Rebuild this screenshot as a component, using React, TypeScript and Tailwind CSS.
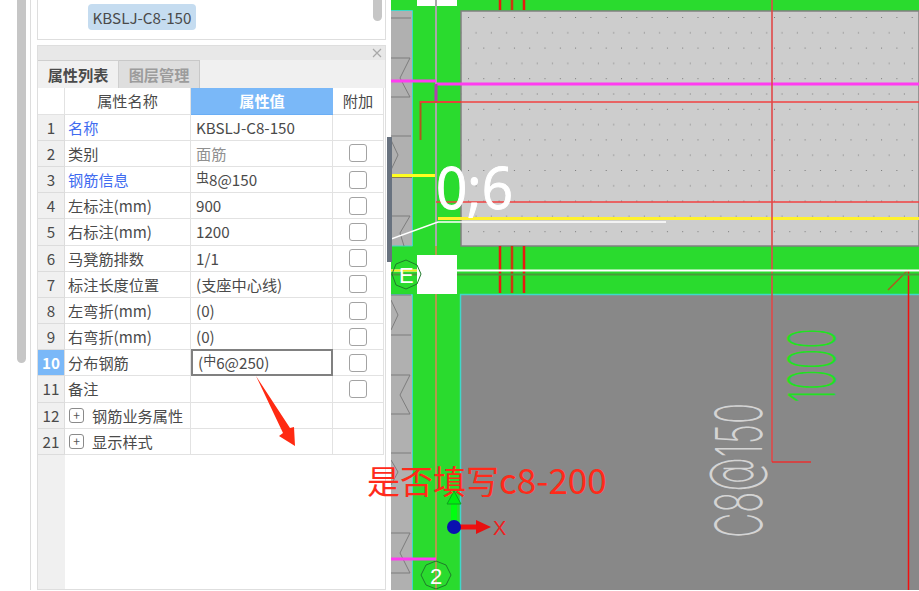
import React from "react";

const FONT = '"Noto Sans CJK SC", "Noto Sans", sans-serif';

type Row = { n: string; name: string; value?: React.ReactNode; blue?: boolean; gray?: boolean; check?: boolean; expand?: boolean; selected?: boolean };

const Rebar = ({ g }: { g: string }) => (
  <span className="text-[13px] relative -top-[3px] leading-none">{g}</span>
);

const rows: Row[] = [
  { n: "1", name: "名称", value: "KBSLJ-C8-150", blue: true },
  { n: "2", name: "类别", value: "面筋", gray: true, check: true },
  { n: "3", name: "钢筋信息", value: <><Rebar g="虫" />8@150</>, blue: true, check: true },
  { n: "4", name: "左标注(mm)", value: "900", check: true },
  { n: "5", name: "右标注(mm)", value: "1200", check: true },
  { n: "6", name: "马凳筋排数", value: "1/1", check: true },
  { n: "7", name: "标注长度位置", value: "(支座中心线)", check: true },
  { n: "8", name: "左弯折(mm)", value: "(0)", check: true },
  { n: "9", name: "右弯折(mm)", value: "(0)", check: true },
  { n: "10", name: "分布钢筋", value: <>(<Rebar g="中" />6@250)</>, check: true, selected: true },
  { n: "11", name: "备注", check: true },
  { n: "12", name: "钢筋业务属性", expand: true },
  { n: "21", name: "显示样式", expand: true },
];

const Checkbox = () => <div className="w-[18px] h-[18px] rounded-[3px] border border-[#a3a3a3] bg-white" />;

const PropertyRow = ({ r }: { r: Row }) => (
  <div className="grid grid-cols-[27px_126px_142px_51px] h-[26.2px] text-[15.2px] leading-none">
    <div className={`flex items-center justify-center border-r border-b border-[#dcdcdc] ${r.selected ? "bg-[#7ab8f8] text-white font-bold" : "bg-[#f0f0f0] text-[#4a4a4a]"}`}>{r.n}</div>
    <div className={`flex items-center pl-[3px] border-r border-b border-[#e2e2e2] whitespace-nowrap ${r.blue ? "text-[#3f6cf0]" : "text-[#4a4a4a]"}`}>
      {r.expand && (
        <span className="w-[15px] h-[15px] mr-[8px] ml-px rounded-[3px] border border-[#8a8a8a] flex items-center justify-center text-[12px] text-[#555]">+</span>
      )}
      {r.name}
    </div>
    <div className={`flex items-center pl-[5px] whitespace-nowrap ${r.selected ? "border-2 border-[#808080] -mt-px" : "border-r border-b border-[#e2e2e2]"} ${r.gray ? "text-[#909090]" : "text-[#4a4a4a]"}`}>{r.value}</div>
    <div className="flex items-center justify-center border-r border-b border-[#e2e2e2]">{r.check && <Checkbox />}</div>
  </div>
);

const PropertyPanel = () => (
  <section className="mt-[5px] h-[545px] border border-[#dedede] flex flex-col bg-white">
    <div className="h-[14px] bg-[#e8e8e8] flex items-center justify-end pr-[3px] text-[#a8a8a8]">
      <svg width="10" height="10" viewBox="0 0 10 10"><path d="M1 1l8 8M9 1l-8 8" stroke="currentColor" strokeWidth="1.2" /></svg>
    </div>
    <div className="h-[28px] bg-[#f0f0f0] flex text-[15.2px] font-bold leading-none">
      <div className="w-[81px] flex items-center justify-center text-[#4a4a4a] border-t border-r border-[#cfcfcf]">属性列表</div>
      <div className="w-[81px] flex items-center justify-center text-[#9c9c9c] bg-[#dedede] border-t border-r border-[#c8c8c8]">图层管理</div>
    </div>
    <div className="grid grid-cols-[27px_126px_142px_51px] h-[26.6px] text-[15.2px] leading-none">
      <div className="border-r border-b border-[#e2e2e2]" />
      <div className="flex items-center justify-center border-r border-b border-[#e2e2e2] text-[#4a4a4a]">属性名称</div>
      <div className="flex items-center justify-center bg-[#7ab8f8] text-white font-bold border-b border-[#6aaef5]">属性值</div>
      <div className="flex items-center justify-center border-r border-b border-[#e2e2e2] text-[#4a4a4a]">附加</div>
    </div>
    {rows.map((r) => <PropertyRow key={r.n} r={r} />)}
    <div className="flex-1 flex">
      <div className="w-[27px] bg-[#f0f0f0]" />
    </div>
  </section>
);

const Canvas = () => {
  const reds = [500, 512, 524];
  return (
    <svg className="block w-[528px] h-[590px]" viewBox="391 0 528 590">
      <defs>
        <pattern id="dots" x="468" y="17" width="15.3" height="30.6" patternUnits="userSpaceOnUse">
          <rect x="0" y="0" width="1" height="1" fill="#777" />
          <rect x="7.5" y="15.3" width="1" height="1" fill="#777" />
        </pattern>
      </defs>
      <rect x="391" y="0" width="528" height="590" fill="#2adb2e" />
      <rect x="391" y="11" width="21" height="235" fill="#b0b0b0" />
      <rect x="391" y="295" width="21" height="295" fill="#b0b0b0" />
      <path d="M391 10.5H412.5V246H391M391 294.500H412.500V590" fill="none" stroke="#3fd8c8" strokeWidth="1" />
      <rect x="461" y="11" width="458" height="235" fill="#cdcdcd" stroke="#808080" strokeWidth="1.500" />
      <rect x="461" y="11" width="458" height="235" fill="url(#dots)" />
      <rect x="461" y="294" width="458" height="296" fill="#888888" />
      <path d="M460.500 590V294.500H919" fill="none" stroke="#3fd8c8" strokeWidth="1.500" />
      <g fill="none" stroke="#7d7d7d" strokeWidth="1">
        <path d="M391 18H411M391 58H410L400 78L410 97H391M391 136H411M391 140L398 155L391 170M391 216H410L400 233L404 246" />
        <path d="M391 295H411M391 300L398 315L391 330M391 335H411M391 375H410L400 395L410 414H391M391 453H411M391 460L398 472L391 485M391 533H410L400 553L410 573H391" />
      </g>
      <rect x="417" y="0" width="40" height="6" fill="#fff" />
      <path d="M436 0V246" stroke="#a8a8a8" strokeWidth="2" />
      <path d="M436 246V590" stroke="#b09a4c" strokeWidth="2" />
      {reds.map((x) => (
        <g key={x}>
          <path d={`M${x} 0V10M${x} 246V293`} stroke={x === 512 ? "#c83a10" : "#e81a10"} strokeWidth="2.500" />
        </g>
      ))}
      <path d="M391 81H436" stroke="#ff3cf0" strokeWidth="3" />
      <path d="M436 84H919" stroke="#ff3cf0" strokeWidth="3" />
      <path d="M436 84V101" stroke="#b040b0" strokeWidth="3" />
      <path d="M420.500 140V102H461" fill="none" stroke="#b0561e" strokeWidth="2" />
      <path d="M420 102H919" stroke="#f04040" strokeWidth="1.500" />
      <path d="M391 177.500H412" stroke="#8a7a50" strokeWidth="1" />
      <path d="M391 175.500H435" stroke="#ffff20" strokeWidth="3" />
      <path d="M436 202H919" stroke="#f04040" strokeWidth="1.500" />
      <path d="M391 239L438 222H666" fill="none" stroke="#fff" strokeWidth="1.500" />
      <path d="M438 218.500H919" stroke="#fff22e" strokeWidth="3" />
      <path d="M772 0V462" stroke="#e04848" strokeOpacity="0.8" strokeWidth="2" />
      <path d="M772 462H811" stroke="#e83030" strokeWidth="1.500" />
      <path d="M908.500 270V590" stroke="#f01010" strokeWidth="1.500" />
      <path d="M888 290L908 270" stroke="#b0561e" strokeWidth="1.500" />
      <path d="M391 270.500H919" stroke="#fff" strokeWidth="2" />
      <path d="M391 270.500H417" stroke="#f0e820" strokeWidth="2" />
      <path d="M391 274.500H919" stroke="#4a9a3a" strokeWidth="2" />
      <rect x="417" y="255" width="40" height="39" fill="#fff" />
      <polygon points="406,260 417,265 421,274 417,284 406,289 396,285 392,274 396,264" fill="none" stroke="#1f7a2a" strokeWidth="1" />
      <text x="399" y="283" fill="#fff" fontSize="22" fontFamily="Liberation Sans, sans-serif">E</text>
      <polygon points="436,561 446,565 451,575 446,585 436,589 426,585 421,575 426,565" fill="none" stroke="#1f7a2a" strokeWidth="1" />
      <text x="430" y="584" fill="#fff" fontSize="22" fontFamily="Liberation Sans, sans-serif">2</text>
      <path d="M391 559H436" stroke="#ff3cf0" strokeWidth="3" />
      <text x="436" y="209" fill="#fff" stroke="#fff" strokeWidth="1" fontSize="59" textLength="77" lengthAdjust="spacingAndGlyphs" fontFamily="Open Sans, sans-serif">0;6</text>
      <text transform="translate(762 538) rotate(-90)" fill="#d4d4d4" fontSize="65" fontWeight="200" textLength="135" lengthAdjust="spacingAndGlyphs" fontFamily="Inter, sans-serif">C8@150</text>
      <text transform="translate(835 403) rotate(-90)" fill="#22e022" fontSize="65" fontWeight="200" textLength="75" lengthAdjust="spacingAndGlyphs" fontFamily="Inter, sans-serif">1000</text>
      <path d="M454 527V503" stroke="#00ff10" strokeWidth="6" />
      <polygon points="454,491 447,504 461,504" fill="#00f010" stroke="#10a020" strokeWidth="1" />
      <path d="M454 527H477" stroke="#f01010" strokeWidth="5" />
      <polygon points="491,527 476,520 476,534" fill="#e81010" />
      <circle cx="454" cy="527" r="7" fill="#0a10b0" />
      <text x="493" y="535" fill="#f02020" fontSize="20" fontFamily="Liberation Sans, sans-serif">X</text>
    </svg>
  );
};

export default function App() {
  return (
    <div className="relative w-[919px] h-[591px] overflow-hidden bg-white flex" style={{ fontFamily: FONT }}>
      <aside className="w-[391px] h-full flex pl-[17px] shrink-0">
        <div className="w-[9px] h-[363px] rounded-b-[5px] bg-[#c6c6c6]" />
        <div className="ml-[4px] w-[361px] h-[590px] border-l border-[#dddddd] pl-[6px]">
          <div className="w-[349px]">
            <section className="relative h-[40px] border border-t-0 border-[#dedede] bg-white">
              <span className="absolute left-[50px] top-[4px] h-[26px] w-[108px] flex items-center justify-center rounded-[4px] bg-[#c5dcf0] text-[15.2px] text-[#4a4a4a] whitespace-nowrap">KBSLJ-C8-150</span>
              <span className="absolute right-[3px] top-0 w-[9px] h-[21px] rounded-b-[5px] bg-[#c6c6c6]" />
            </section>
            <PropertyPanel />
          </div>
        </div>
      </aside>
      <main className="flex-1 h-full">
        <Canvas />
      </main>

      <div className="absolute left-[387px] top-[137px] w-[5px] h-[125px] bg-[#68727f]" />
      <svg className="absolute left-0 top-0 pointer-events-none" width="919" height="591">
        <polygon points="256,376 290,428 294,427 295,446 279,436 283,433" fill="#ff2a12" />
      </svg>
      <div className="absolute left-[367px] top-[455px] text-[33px] leading-[48px] text-[#ff2a1a] whitespace-nowrap">是否填写<span className="text-[35px]">c8-200</span></div>
    </div>
  );
}
